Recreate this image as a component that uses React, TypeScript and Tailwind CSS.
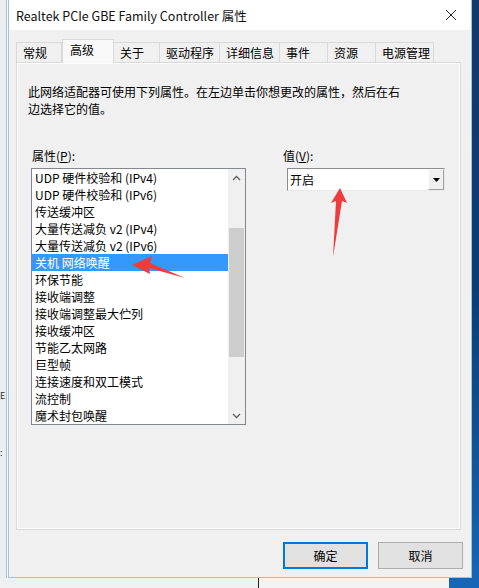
import React from "react";

const items = [
  "UDP 硬件校验和 (IPv4)",
  "UDP 硬件校验和 (IPv6)",
  "传送缓冲区",
  "大量传送减负 v2 (IPv4)",
  "大量传送减负 v2 (IPv6)",
  "关机 网络唤醒",
  "环保节能",
  "接收端调整",
  "接收端调整最大伫列",
  "接收缓冲区",
  "节能乙太网路",
  "巨型帧",
  "连接速度和双工模式",
  "流控制",
  "魔术封包唤醒",
];

const tabs = [
  { label: "常规", w: "w-[46px]" },
  { label: "高级", w: "w-[52px]", active: true },
  { label: "关于", w: "w-[46px]" },
  { label: "驱动程序", w: "w-[60px]" },
  { label: "详细信息", w: "w-[60px]" },
  { label: "事件", w: "w-[48px]" },
  { label: "资源", w: "w-[48px]" },
  { label: "电源管理", w: "w-[58px]" },
];

export default function App() {
  return (
    <div
      className="relative w-[479px] h-[588px] overflow-hidden flex flex-col bg-[#e4e7ea] text-[#000] text-[12px] leading-[17px]"
      style={{ fontFamily: '"Noto Sans CJK SC", "Noto Sans", sans-serif' }}
    >
      <div className="flex h-[578px]">
        {/* desktop strip left */}
        <div className="w-[8px] flex bg-[#eceff1]">
          <div className="w-[6px] flex flex-col items-start">
            <span className="mt-[389px] text-[9px] leading-[14px] text-[#333]">E</span>
            <span className="mt-[43px] text-[9px] leading-[14px] text-[#333]">:</span>
          </div>
          <div className="w-[1px] bg-[#b9bec3]" />
          <div className="w-[1px] bg-[#f7f7f7]" />
        </div>

        {/* dialog */}
        <div className="w-[464px] flex flex-col border-x border-b border-[#9cc2e5] bg-[#f0f0f0]">
          {/* title bar */}
          <div className="h-[30px] bg-white flex items-center justify-between pl-[7px] pr-[10px]">
            <span className="text-[12.5px] text-[#111]">Realtek PCIe GBE Family Controller 属性</span>
            <svg width="12" height="12" viewBox="0 0 12 12" className="mr-[4px]">
              <path d="M1 1 L11 11 M11 1 L1 11" stroke="#222" strokeWidth="1" />
            </svg>
          </div>

          {/* tabs */}
          <div className="mt-[9px] ml-[7px] flex items-end h-[23px]">
            {tabs.map((t) =>
              t.active ? (
                <div
                  key={t.label}
                  className={`${t.w} h-[24px] -mb-[1px] relative z-10 bg-[#f9f9f9] border-x border-t border-[#d9d9d9] flex items-start pt-[1px] pl-[7px]`}
                >
                  {t.label}
                </div>
              ) : (
                <div
                  key={t.label}
                  className={`${t.w} h-[20px] bg-[#f0f0f0] border-t border-r border-[#d9d9d9] first:border-l flex items-center pl-[6px]`}
                >
                  {t.label}
                </div>
              )
            )}
          </div>

          {/* tab panel */}
          <div className="ml-[7px] w-[445px] h-[468px] border border-[#d9d9d9] bg-[#f0f0f0] shadow-[inset_0_0_0_1px_#fcfcfc] flex flex-col">
            <p className="pt-[20px] pl-[11px]">
              此网络适配器可使用下列属性。在左边单击你想更改的属性，然后在右
              <br />
              边选择它的值。
            </p>

            <div className="mt-[30px] flex">
              {/* property list */}
              <div className="ml-[14px] w-[215px] flex flex-col">
                <span className="pl-[1px] h-[17px]">
                  属性(<span className="underline">P</span>):
                </span>
                <div className="mt-[4px] h-[257px] border border-[#828790] bg-white flex">
                  <div className="w-[197px] flex flex-col">
                    {items.map((it) => (
                      <div
                        key={it}
                        className={`h-[17px] pl-[3px] whitespace-nowrap ${
                          it === "关机 网络唤醒" ? "bg-[#3399ff] text-white" : ""
                        }`}
                      >
                        {it}
                      </div>
                    ))}
                  </div>
                  {/* scrollbar */}
                  <div className="w-[17px] bg-[#f0f0f0] flex flex-col">
                    <div className="h-[17px] flex items-center justify-center">
                      <svg width="9" height="6" viewBox="0 0 9 6">
                        <path d="M1 5 L4.5 1.5 L8 5" stroke="#606060" strokeWidth="1.3" fill="none" />
                      </svg>
                    </div>
                    <div className="flex-1 flex flex-col px-[1px]">
                      <div className="mt-[42px] h-[129px] bg-[#cdcdcd]" />
                    </div>
                    <div className="h-[17px] flex items-center justify-center">
                      <svg width="9" height="6" viewBox="0 0 9 6">
                        <path d="M1 1 L4.5 4.5 L8 1" stroke="#606060" strokeWidth="1.3" fill="none" />
                      </svg>
                    </div>
                  </div>
                </div>
              </div>

              {/* value */}
              <div className="ml-[37px] flex flex-col">
                <span className="h-[17px]">
                  值(<span className="underline">V</span>):
                </span>
                <div className="mt-[4px] ml-[4px] w-[158px] h-[23px] flex border-t border-l border-[#8c8c8c] border-b border-r border-b-[#e8e8e8] border-r-[#e8e8e8] bg-white">
                  <div className="flex-1 pl-[2px] flex items-center">开启</div>
                  <div className="w-[16px] bg-[#f0f0f0] border-l border-t border-[#fdfdfd] border-b border-r border-b-[#a0a0a0] border-r-[#a0a0a0] flex items-center justify-center">
                    <svg width="7" height="4" viewBox="0 0 7 4">
                      <path d="M0 0 L7 0 L3.5 4 Z" fill="#000" />
                    </svg>
                  </div>
                </div>
              </div>
            </div>
          </div>

          {/* buttons */}
          <div className="mt-[12px] pr-[8px] flex justify-end gap-[10px]">
            <button className="w-[85px] h-[27px] bg-[#e1e1e1] border-2 border-[#0078d7] text-[12px]">确定</button>
            <button className="w-[85px] h-[27px] bg-[#e1e1e1] border border-[#adadad] text-[12px]">取消</button>
          </div>
        </div>

        {/* desktop strip right */}
        <div className="flex-1 bg-gradient-to-b from-[#12396a] via-[#0d3c74] to-[#1766b5]" />
      </div>

      {/* desktop strip bottom */}
      <div className="flex-1 flex bg-[#eef0f2]">
        <div className="w-[258px]" />
        <div className="w-[1px] bg-[#222]" />
        <div className="w-[190px] bg-[#f3f3f3]" />
        <div className="flex-1 bg-[#1766b5]" />
      </div>

      {/* red annotation arrows */}
      <svg className="absolute left-0 top-0 pointer-events-none" width="479" height="588" viewBox="0 0 479 588">
        <polygon points="132,265 152,256 150,263 185,278 149,268 150,274" fill="#ef3b3b" />
        <polygon points="340,188 347,203 342,201 333,257 336,201 331,203" fill="#ef3b3b" />
      </svg>
    </div>
  );
}
